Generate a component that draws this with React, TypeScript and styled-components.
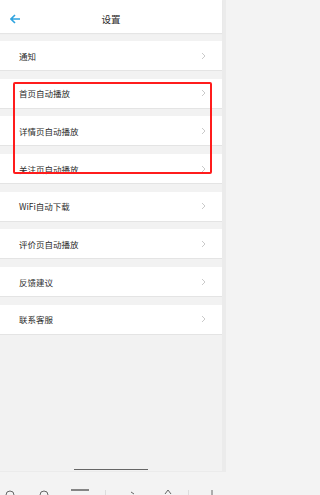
import React from "react";
import styled, { createGlobalStyle } from "styled-components";

const GlobalStyle = createGlobalStyle`
  html, body {
    margin: 0;
    padding: 0;
    background: #f3f3f3;
  }
  body {
    font-family: "Noto Sans CJK SC", "Liberation Sans", sans-serif;
  }
`;

const items = [
  "通知",
  "首页自动播放",
  "详情页自动播放",
  "关注页自动播放",
  "WiFi自动下载",
  "评价页自动播放",
  "反馈建议",
  "联系客服",
];

function BackArrow() {
  return (
    <svg width="11" height="10" viewBox="0 0 11 10">
      <path d="M5 1 L1 5 L5 9 M1 5 H10" fill="none" stroke="#2ea3df" strokeWidth="1.6" />
    </svg>
  );
}

function Chevron() {
  return (
    <svg width="5" height="8" viewBox="0 0 5 8">
      <path d="M1 1 L4 4 L1 7" fill="none" stroke="#c4c4c4" strokeWidth="0.9" />
    </svg>
  );
}

export default function App() {
  return (
    <>
      <GlobalStyle />
      <Frame>
        <Top>
          <Screen>
            <Header>
              <Back>
                <BackArrow />
              </Back>
              <Title>设置</Title>
            </Header>
            <List>
              {items.map((label) => (
                <Row key={label}>
                  <Label>{label}</Label>
                  <Chevron />
                </Row>
              ))}
              <Highlight />
            </List>
            <Filler>
              <HomeBar />
            </Filler>
          </Screen>
          <Strip />
        </Top>
        <Toolbar>
          <ToolIcon $ml={5}>
            <svg width="10" height="6" viewBox="0 0 10 6">
              <path d="M1 6 A4 4 0 0 1 9 6" fill="none" stroke="#666" strokeWidth="1" />
            </svg>
          </ToolIcon>
          <ToolIcon $ml={24}>
            <svg width="10" height="6" viewBox="0 0 10 6">
              <path d="M1 6 A4 4 0 0 1 9 6" fill="none" stroke="#666" strokeWidth="1" />
            </svg>
          </ToolIcon>
          <ToolIcon $ml={21}>
            <svg width="20" height="6" viewBox="0 0 20 6">
              <path d="M1 1 H19" fill="none" stroke="#555" strokeWidth="1.4" />
            </svg>
          </ToolIcon>
          <Divider $ml={15} />
          <ToolIcon $ml={23}>
            <svg width="8" height="6" viewBox="0 0 8 6">
              <path d="M2 3 L5 5" fill="none" stroke="#666" strokeWidth="1" />
            </svg>
          </ToolIcon>
          <ToolIcon $ml={27}>
            <svg width="8" height="6" viewBox="0 0 8 6">
              <path d="M1 5 L4 1 L7 5" fill="none" stroke="#666" strokeWidth="1" />
            </svg>
          </ToolIcon>
          <Divider $ml={16} />
          <ToolIcon $ml={21}>
            <svg width="4" height="6" viewBox="0 0 4 6">
              <path d="M2 1 V6" fill="none" stroke="#666" strokeWidth="1" />
            </svg>
          </ToolIcon>
        </Toolbar>
      </Frame>
    </>
  );
}

const Frame = styled.div`
  width: 226px;
  height: 495px;
  display: flex;
  flex-direction: column;
  overflow: hidden;
`;

const Top = styled.div`
  display: flex;
  height: 472px;
`;

const Screen = styled.div`
  flex: 1;
  display: flex;
  flex-direction: column;
  background: #f2f2f2;
  border-bottom: 1px solid #ebebeb;
`;

const Strip = styled.div`
  width: 4px;
  background: #ebebeb;
`;

const Header = styled.div`
  height: 33px;
  position: relative;
  display: flex;
  align-items: center;
  justify-content: center;
  background: #fff;
  box-shadow: 0 1px 1px rgba(0, 0, 0, 0.05);
`;

const Back = styled.div`
  position: absolute;
  left: 10px;
  top: 14px;
  display: flex;
`;

const Title = styled.div`
  font-size: 9.5px;
  color: #2b2b2b;
  margin-top: 5px;
`;

const List = styled.div`
  position: relative;
  display: flex;
  flex-direction: column;
  gap: 7.7px;
  padding-top: 8px;
`;

const Row = styled.div`
  height: 29px;
  display: flex;
  align-items: center;
  justify-content: space-between;
  padding: 0 16px 0 19px;
  background: #fff;
  border-bottom: 1px solid #e4e4e4;
`;

const Label = styled.span`
  font-size: 8.5px;
  color: #2b2b2b;
`;

const Highlight = styled.div`
  position: absolute;
  left: 13px;
  top: 49px;
  width: 195px;
  height: 88px;
  border: 2px solid #ff1c1c;
  border-radius: 2px;
  pointer-events: none;
`;

const Filler = styled.div`
  flex: 1;
  display: flex;
  align-items: flex-end;
  justify-content: center;
  padding-bottom: 1px;
`;

const HomeBar = styled.div`
  width: 74px;
  height: 1.5px;
  background: #666;
`;

const Toolbar = styled.div`
  flex: 1;
  display: flex;
  align-items: flex-end;
  background: #f3f3f3;
`;

const ToolIcon = styled.div<{ $ml: number }>`
  display: flex;
  align-items: flex-end;
  margin-left: ${(p) => p.$ml}px;
`;

const Divider = styled.div<{ $ml: number }>`
  width: 1px;
  height: 5px;
  margin-left: ${(p) => p.$ml}px;
  background: #ddd;
`;
